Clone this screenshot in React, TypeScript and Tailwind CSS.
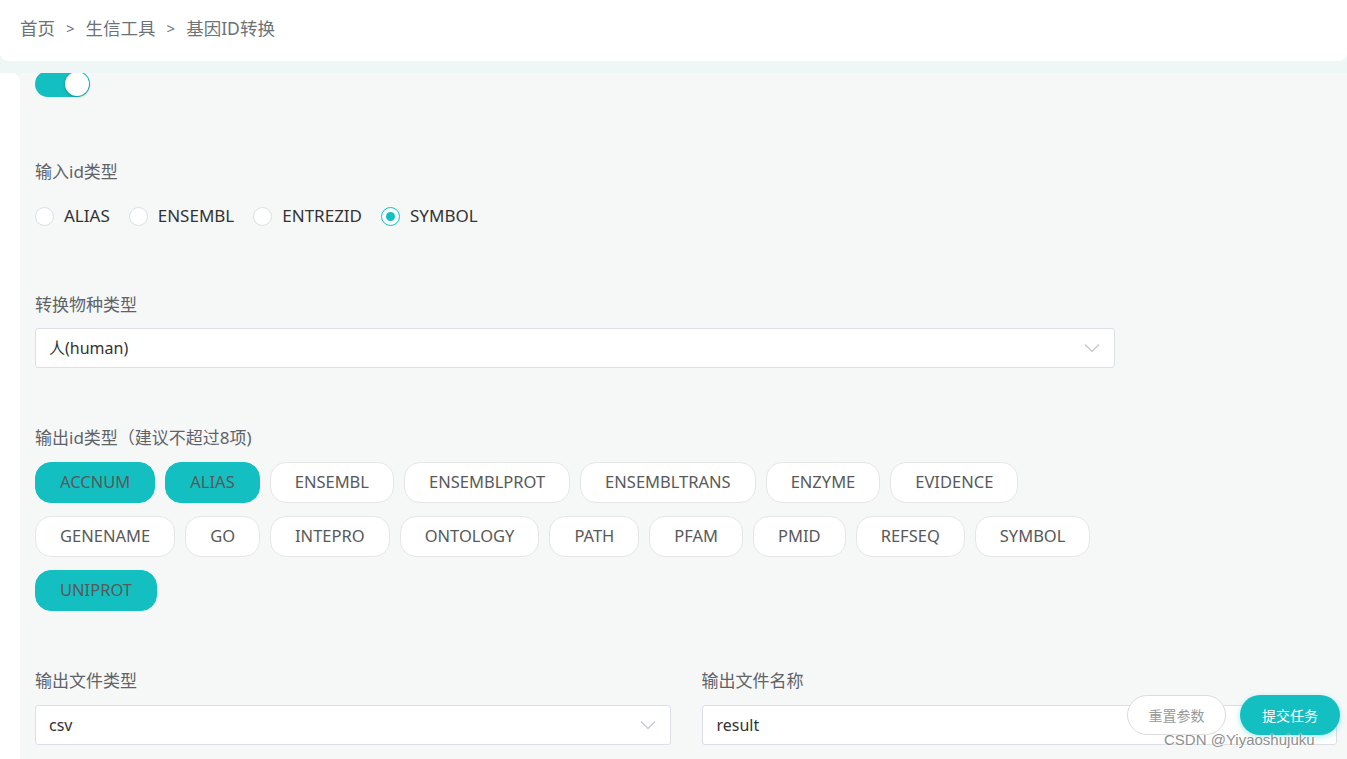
import { useState } from "react";

const idTypes = ["ALIAS", "ENSEMBL", "ENTREZID", "SYMBOL"];

const outTypes = [
  "ACCNUM", "ALIAS", "ENSEMBL", "ENSEMBLPROT", "ENSEMBLTRANS", "ENZYME", "EVIDENCE",
  "GENENAME", "GO", "INTEPRO", "ONTOLOGY", "PATH", "PFAM", "PMID", "REFSEQ", "SYMBOL",
  "UNIPROT",
];

const font = { fontFamily: '"Noto Sans", "Noto Sans CJK SC", sans-serif' };

function Chevron() {
  return (
    <svg width="16" height="10" viewBox="0 0 16 10" fill="none" className="shrink-0">
      <path d="M1 1.5 L8 8.5 L15 1.5" stroke="#c0c4cc" strokeWidth="1.2" />
    </svg>
  );
}

function SelectBox({ value, className }: { value: string; className?: string }) {
  return (
    <div
      className={`h-[40px] bg-white border border-[#dcdfe6] rounded-[3px] flex items-center justify-between pl-[13px] pr-[14px] text-[16px] text-[#333] ${className ?? ""}`}
    >
      <span>{value}</span>
      <Chevron />
    </div>
  );
}

export default function App() {
  const [idType, setIdType] = useState("SYMBOL");
  const [selected, setSelected] = useState<string[]>(["ACCNUM", "ALIAS", "UNIPROT"]);

  const toggle = (t: string) =>
    setSelected((s) => (s.includes(t) ? s.filter((x) => x !== t) : [...s, t]));

  return (
    <div className="h-screen w-full overflow-hidden bg-[#eef7f6] relative" style={font}>
      {/* breadcrumb */}
      <header className="h-[61px] bg-white rounded-b-lg flex items-center pl-[20px] pb-[5px] text-[17.5px] text-[#6b7278]">
        <span>首页</span>
        <span className="mx-[11px] text-[15px]">&gt;</span>
        <span>生信工具</span>
        <span className="mx-[11px] text-[15px]">&gt;</span>
        <span>基因ID转换</span>
      </header>

      <div className="flex mt-[12px] h-[686px]">
        <div className="w-[20px] bg-white rounded-tr-lg" />
        <main className="flex-1 bg-[#f6f8f8] pl-[15px] pr-[10px] overflow-hidden">
          {/* switch */}
          <div className="w-[55px] h-[26px] -mt-[2px] rounded-full bg-[#13bfc1] relative">
            <div className="absolute right-[1px] top-[1px] w-[24px] h-[24px] rounded-full bg-white shadow-[0_1px_3px_rgba(0,0,0,0.25)]" />
          </div>

          <div className="mt-[63px] text-[17px] leading-[24px] text-[#5f6368]">输入id类型</div>
          <div className="mt-[20px] flex items-center h-[24px]">
            {idTypes.map((t) => (
              <label
                key={t}
                className="flex items-center mr-[19px] cursor-pointer"
                onClick={() => setIdType(t)}
              >
                <span
                  className={`w-[19px] h-[19px] rounded-full border bg-white flex items-center justify-center ${
                    idType === t ? "border-[#13bfc1]" : "border-[#dcdfe6]"
                  }`}
                >
                  {idType === t && <span className="w-[9px] h-[9px] rounded-full bg-[#13bfc1]" />}
                </span>
                <span className="ml-[10px] text-[17px] text-[#333]">{t}</span>
              </label>
            ))}
          </div>

          <div className="mt-[65px] text-[17px] leading-[24px] text-[#5f6368]">转换物种类型</div>
          <SelectBox value="人(human)" className="mt-[11px] w-[1080px]" />

          <div className="mt-[58px] text-[17px] leading-[24px] text-[#5f6368]">
            输出id类型（建议不超过8项)
          </div>
          <div className="mt-[12px] flex flex-wrap w-[1100px] gap-y-[13px]">
            {outTypes.map((t) => (
              <button
                key={t}
                onClick={() => toggle(t)}
                className={`h-[41px] px-[24px] mr-[10px] rounded-[16px] border text-[16.5px] text-[#595959] ${
                  selected.includes(t)
                    ? "bg-[#13bfc1] border-[#13bfc1]"
                    : "bg-white border-[#e6e6e6]"
                }`}
              >
                {t}
              </button>
            ))}
          </div>

          <div className="mt-[58px] grid grid-cols-2 gap-x-[31px]">
            <div>
              <div className="text-[17px] leading-[24px] text-[#5f6368]">输出文件类型</div>
              <SelectBox value="csv" className="mt-[12px]" />
            </div>
            <div>
              <div className="text-[17px] leading-[24px] text-[#5f6368]">输出文件名称</div>
              <div className="mt-[12px] h-[40px] bg-white border border-[#dcdfe6] rounded-[3px] flex items-center pl-[14px] text-[16px] text-[#333]">
                result
              </div>
            </div>
          </div>
        </main>
      </div>

      {/* floating actions */}
      <div className="absolute left-[1127px] top-[695px] flex gap-[14px]">
        <button className="w-[99px] h-[40px] rounded-full bg-white border border-[#dcdcdc] text-[14px] text-[#999]">
          重置参数
        </button>
        <button className="w-[100px] h-[40px] rounded-full bg-[#13bfc1] text-[14px] text-white shadow-[0_2px_6px_rgba(19,191,193,0.35)]">
          提交任务
        </button>
      </div>
      <div
        className="absolute left-[1164px] top-[729px] text-[15px] text-[#8f8f8f] [text-shadow:0_0_2px_#fff,0_0_2px_#fff]"
        style={{ fontFamily: '"Liberation Sans", Arial, sans-serif' }}
      >
        CSDN @Yiyaoshujuku
      </div>
    </div>
  );
}
